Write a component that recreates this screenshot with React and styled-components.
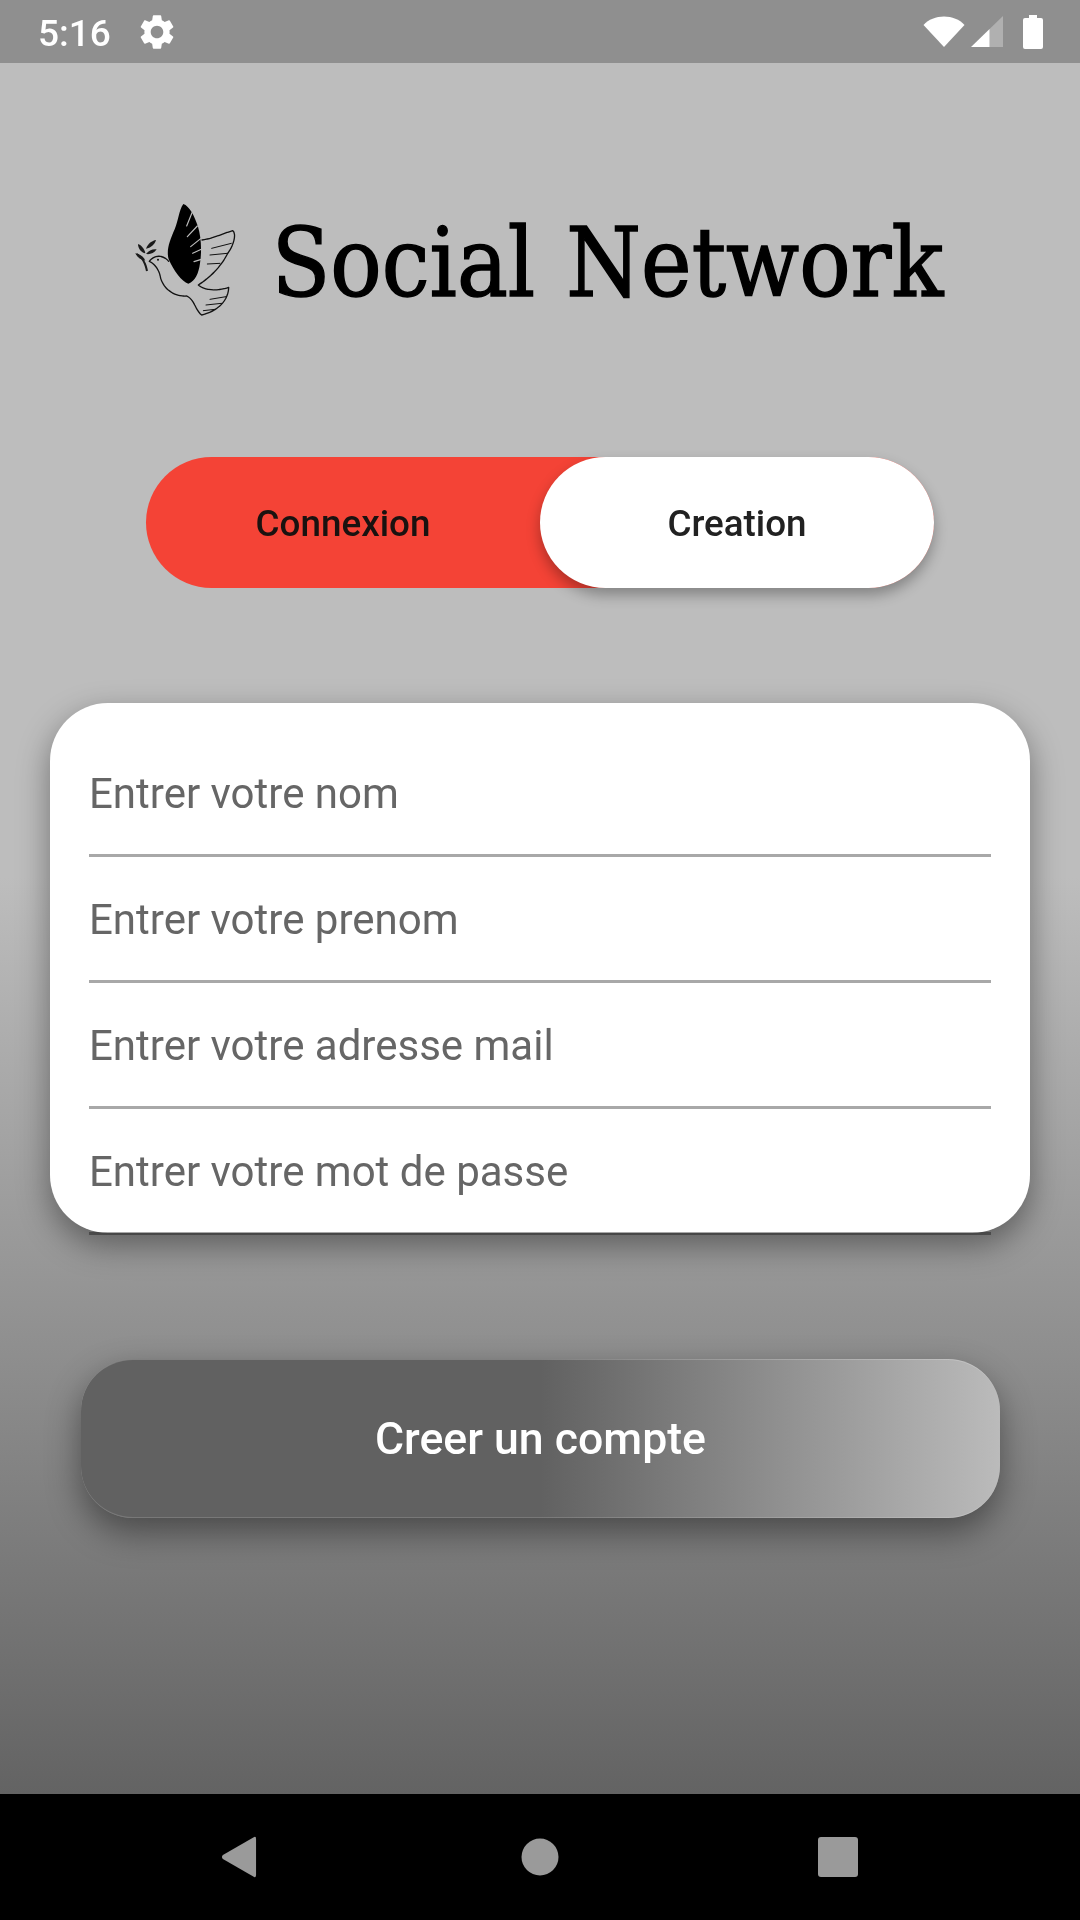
import React from 'react'
import styled, { createGlobalStyle } from 'styled-components'
import { MdSettings } from 'react-icons/md'

const GlobalStyle = createGlobalStyle`
    html, body {
        margin: 0;
        padding: 0;
        background: #000;
    }
    * {
        box-sizing: border-box;
    }
`

const Screen = styled.div`
    width: 1080px;
    height: 1920px;
    display: flex;
    flex-direction: column;
    overflow: hidden;
    font-family: Roboto, "Liberation Sans", sans-serif;
`

const StatusBar = styled.div`
    height: 63px;
    flex: none;
    display: flex;
    align-items: center;
    padding: 0 37px 0 38px;
    background: #8f8f8f;
    color: #fff;
`

const Clock = styled.span`
    font-size: 37px;
    font-weight: 500;
    line-height: 63px;
    padding-top: 3px;
    margin-right: 25px;
    will-change: transform;
`

const StatusIcons = styled.div`
    margin-left: auto;
    display: flex;
    align-items: center;
    gap: 5px;
`

const Main = styled.main`
    flex: 1;
    display: flex;
    flex-direction: column;
    align-items: center;
    background: linear-gradient(180deg, #bdbdbd 0%, #bdbdbd 47%, #636363 100%);
`

const Logo = styled.div`
    margin-top: 137px;
    height: 120px;
    padding-right: 17px;
    display: flex;
    align-items: center;
    gap: 12px;
`

const LogoTitle = styled.h1`
    margin: 5px 0 0;
    font-family: "DejaVu Serif", "Liberation Serif", serif;
    font-stretch: condensed;
    font-weight: 400;
    font-size: 95px;
    word-spacing: 4px;
    line-height: 120px;
    color: #000;
    white-space: nowrap;
    -webkit-text-stroke: 1.4px #000;
`

const Toggle = styled.div`
    margin-top: 137px;
    width: 788px;
    height: 131px;
    display: flex;
    border-radius: 66px;
    background: #f44336;
`

const ToggleOption = styled.div`
    flex: 1;
    display: flex;
    align-items: center;
    justify-content: center;
    padding-top: 2px;
    border-radius: 66px;
    font-size: 36.8px;
    font-weight: 500;
    color: ${({ $active }) => ($active ? '#212121' : '#1a1210')};
    background: ${({ $active }) => ($active ? '#fff' : 'transparent')};
    box-shadow: ${({ $active }) => ($active ? '0 7px 14px rgba(0, 0, 0, 0.3)' : 'none')};
    will-change: transform;
`

const FormCard = styled.div`
    margin-top: 115px;
    width: 980px;
    height: 530px;
    padding: 28px 39px 0;
    border-radius: 58px;
    background: #fff;
    box-shadow: 0 12px 32px rgba(0, 0, 0, 0.4);
`

const Field = styled.div`
    height: 126px;
    padding-top: 27px;
    border-bottom: 3px solid rgba(0, 0, 0, 0.34);
    font-size: 42px;
    line-height: 72px;
    color: #666;
    will-change: transform;
`

const SubmitButton = styled.button`
    margin-top: 126px;
    width: 919px;
    height: 159px;
    border: 0;
    border-top: 1px solid rgba(255, 255, 255, 0.2);
    border-bottom: 1px solid rgba(255, 255, 255, 0.15);
    border-radius: 52px;
    background: linear-gradient(90deg, #616161 0%, #616161 50%, #bbb 100%);
    box-shadow: 0 14px 34px rgba(0, 0, 0, 0.42);
    color: #fff;
    font-family: inherit;
    font-size: 44.6px;
    font-weight: 500;
    will-change: transform;
`

const NavBar = styled.nav`
    height: 126px;
    flex: none;
    display: flex;
    align-items: center;
    justify-content: center;
    background: #000;
    color: #9a9a9a;
`

const NavSlot = styled.div`
    width: 298px;
    display: flex;
    justify-content: center;
`

const Dove = () => (
    <svg width="140" height="140" viewBox="0 0 420 420" fill="none">
        <path
            d="M190 42 C208 48 224 78 234 110 C243 140 246 180 240 220 C236 250 226 274 205 281 C185 276 160 240 146 208 C138 180 150 150 164 118 C176 90 176 62 190 42 Z"
            fill="#000"
        />
        <g stroke="#bdbdbd" strokeWidth="3.5" strokeLinecap="round">
            <path d="M216 68 L200 108" />
            <path d="M232 108 L202 140" />
            <path d="M242 146 L212 170" />
            <path d="M244 178 L218 190" />
            <path d="M244 208 L222 215" />
        </g>
        <g stroke="#111" strokeWidth="4" strokeLinecap="round" strokeLinejoin="round">
            <path d="M246 150 C280 145 310 130 338 122 C350 130 342 165 322 192 C305 225 280 255 235 285 C250 300 290 305 326 292 C326 325 300 362 245 375 C225 360 225 330 200 318 C170 320 135 305 122 265 C118 240 105 222 88 214 C100 198 125 190 146 214" strokeDasharray="14 2" />
            <path d="M334 160 L275 175 M322 190 L270 195 M300 220 L262 222" strokeWidth="3" />
            <path d="M318 320 L270 328 M305 340 L258 345 M285 358 L250 362" strokeWidth="3" />
        </g>
        <g fill="#1a1a1a">
            <path d="M84 242 C80 220 72 205 52 190 L50 194 C66 206 74 222 78 244 Z" />
            <path d="M54 162 C62 164 74 176 76 190 C64 188 54 176 54 162 Z" />
            <path d="M108 150 C104 164 92 174 78 176 C84 160 96 152 108 150 Z" />
            <path d="M110 178 C102 190 90 194 78 192 C86 182 98 176 110 178 Z" />
            <path d="M46 190 C58 192 72 200 76 212 C62 210 52 202 46 190 Z" />
        </g>
        <circle cx="114" cy="209" r="3" fill="#111" />
    </svg>
)

const WifiIcon = () => (
    <svg width="42" height="31" viewBox="0 0 41 31" fill="#fff" preserveAspectRatio="none" style={{ marginRight: 1 }}>
        <path d="M0.5 9 C10 -2.5 31 -2.5 40.5 9 L20.5 31 Z" />
    </svg>
)

const SignalIcon = () => (
    <svg width="32" height="31" viewBox="0 0 31 31" preserveAspectRatio="none">
        <path d="M31 0 L31 31 L18 31 L18 13 Z" fill="#b0b0b0" />
        <path d="M18 13 L18 31 L0 31 Z" fill="#fff" />
    </svg>
)

const BatteryIcon = () => (
    <svg width="20" height="34" viewBox="0 0 20 34" fill="#fff" style={{ marginLeft: 15 }}>
        <path d="M6 0 H14 V3 H18 Q20 3 20 5 V32 Q20 34 18 34 H2 Q0 34 0 32 V5 Q0 3 2 3 H6 Z" />
    </svg>
)

const App = () => (
    <Screen>
        <GlobalStyle />
        <StatusBar>
            <Clock>5:16</Clock>
            <MdSettings size={42} color="#fff" />
            <StatusIcons>
                <WifiIcon />
                <SignalIcon />
                <BatteryIcon />
            </StatusIcons>
        </StatusBar>
        <Main>
            <Logo>
                <Dove />
                <LogoTitle>Social Network</LogoTitle>
            </Logo>
            <Toggle>
                <ToggleOption>Connexion</ToggleOption>
                <ToggleOption $active>Creation</ToggleOption>
            </Toggle>
            <FormCard>
                <Field>Entrer votre nom</Field>
                <Field>Entrer votre prenom</Field>
                <Field>Entrer votre adresse mail</Field>
                <Field>Entrer votre mot de passe</Field>
            </FormCard>
            <SubmitButton>Creer un compte</SubmitButton>
        </Main>
        <NavBar>
            <NavSlot>
                <svg width="36" height="42" viewBox="0 0 38 44" fill="currentColor" style={{ marginLeft: -7 }}>
                    <path d="M35 1 Q37 0 37 3 V41 Q37 44 35 43 L2 24 Q0 22 2 20 Z" />
                </svg>
            </NavSlot>
            <NavSlot>
                <svg width="38" height="38" viewBox="0 0 38 38" fill="currentColor">
                    <circle cx="19" cy="19" r="18.5" />
                </svg>
            </NavSlot>
            <NavSlot>
                <svg width="40" height="40" viewBox="0 0 40 40" fill="currentColor">
                    <rect width="40" height="40" rx="3" />
                </svg>
            </NavSlot>
        </NavBar>
    </Screen>
)

export default App
